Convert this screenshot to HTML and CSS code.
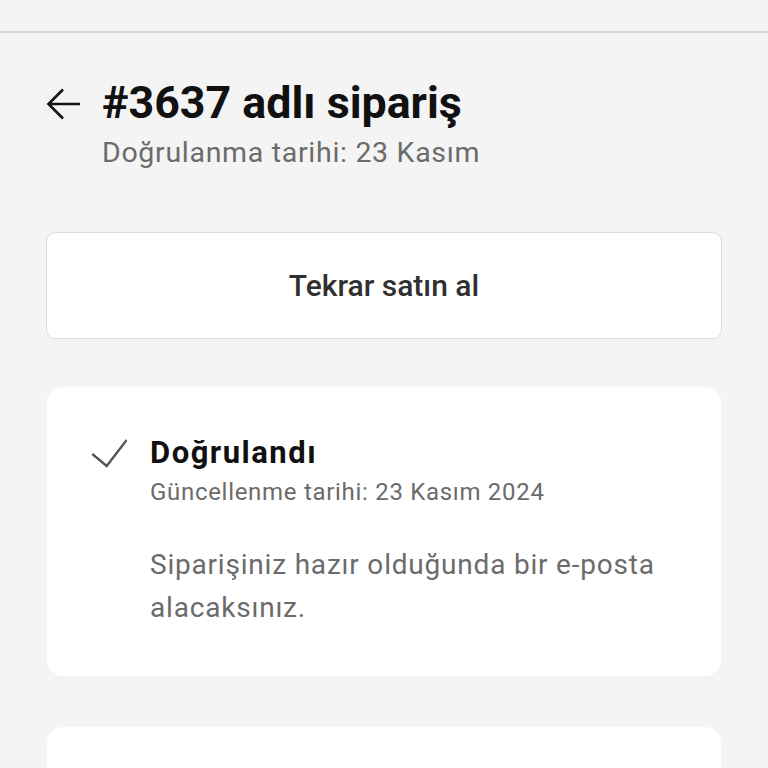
FILE: index.html
```html
<!DOCTYPE html>
<html lang="tr">
<head>
<meta charset="utf-8">
<link rel="stylesheet" href="styles.css">
</head>
<body>
<div class="topbar"></div>
<main class="page">
  <header class="head">
    <svg class="back" viewBox="0 0 36 36" width="36" height="36" aria-hidden="true">
      <path d="M34 18H2.5M17 3.5L2.5 18L17 32.5" fill="none" stroke="#111" stroke-width="2.6"/>
    </svg>
    <div class="head-text">
      <h1 class="title">#3637 adlı sipariş</h1>
      <p class="subtitle">Doğrulanma tarihi: 23 Kasım</p>
    </div>
  </header>
  <button class="rebuy">Tekrar satın al</button>
  <section class="card">
    <svg class="check" viewBox="0 0 36 30" width="36" height="30" aria-hidden="true">
      <path d="M1.3 16L15.7 28L35.7 2" fill="none" stroke="#555" stroke-width="2.4"/>
    </svg>
    <div class="card-body">
      <h2 class="status">Doğrulandı</h2>
      <p class="updated">Güncellenme tarihi: 23 Kasım 2024</p>
      <p class="note">Siparişiniz hazır olduğunda bir e-posta alacaksınız.</p>
    </div>
  </section>
  <section class="card card-next"></section>
</main>
</body>
</html>
```
FILE: styles.css
```css
html, body {
  margin: 0;
  padding: 0;
  background: #f4f4f4;
  font-family: Roboto, "Noto Sans", sans-serif;
  overflow: hidden;
  height: 768px;
}
.topbar {
  height: 31px;
  border-bottom: 2px solid #d8d8d8;
}
.page {
  padding: 0 46px;
}
.head {
  display: flex;
  align-items: flex-start;
  gap: 20px;
  margin-top: 44px;
}
.back {
  display: block;
  flex: none;
  margin-top: 9px;
}
.title {
  margin: 0;
  font-size: 44.75px;
  line-height: 52px;
  font-weight: 700;
  color: #111;
}
.subtitle {
  margin: 6px 0 0;
  font-size: 28.5px;
  line-height: 36px;
  letter-spacing: 0.7px;
  color: #6b6b6b;
}
.rebuy {
  display: flex;
  align-items: center;
  justify-content: center;
  width: 100%;
  height: 107px;
  margin-top: 61px;
  padding: 0;
  background: #fff;
  border: 1.5px solid #dcdcdc;
  border-radius: 9px;
  font-family: Roboto, sans-serif;
  font-size: 30px;
  font-weight: 500;
  color: #303030;
}
.card {
  display: flex;
  align-items: flex-start;
  gap: 23px;
  background: #fff;
  border-radius: 16px;
  margin: 48px 1px 0;
  padding: 46px 44px 47px;
}
.check {
  display: block;
  flex: none;
  margin-top: 5px;
}
.status {
  margin: 0;
  font-size: 31px;
  line-height: 40px;
  letter-spacing: 1.5px;
  font-weight: 700;
  color: #111;
}
.updated {
  margin: 4px 0 0;
  font-size: 24px;
  line-height: 30px;
  letter-spacing: 0.7px;
  color: #6b6b6b;
}
.note {
  margin: 36px 0 0;
  font-size: 28px;
  line-height: 43px;
  letter-spacing: 0.8px;
  color: #6b6b6b;
}
.card-next {
  height: 42px;
  padding: 0;
  margin-top: 51px;
  border-radius: 16px 16px 0 0;
}
```
